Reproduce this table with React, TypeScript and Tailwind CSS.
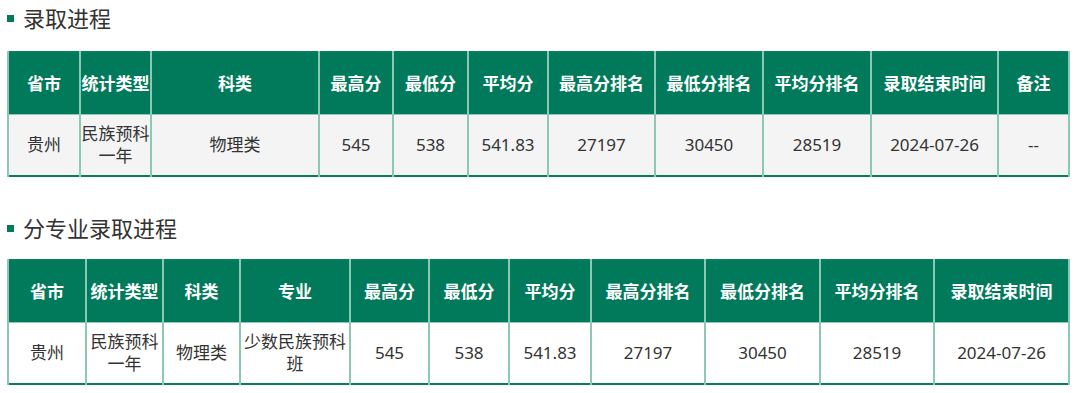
import React from "react";

const font = { fontFamily: '"Microsoft YaHei", "Noto Sans", "Noto Sans CJK SC", sans-serif' };

type Col = { h: string; w: number };

function Heading({ text }: { text: string }) {
  return (
    <div className="flex items-center h-[36px]">
      <div className="w-[7px] h-[7px] bg-[#007a5a] mr-[9px]" />
      <span className="text-[22px] text-[#333] leading-none">{text}</span>
    </div>
  );
}

function DataTable({ cols, row, bg }: { cols: Col[]; row: string[]; bg: string }) {
  return (
    <table className="table-fixed border-collapse border-2 border-[#0a7d5c] w-[1061px]">
      <colgroup>
        {cols.map((c, i) => (
          <col key={i} style={{ width: c.w }} />
        ))}
      </colgroup>
      <thead>
        <tr className="h-[62px] bg-[#007a5a]">
          {cols.map((c, i) => (
            <th
              key={i}
              className="border-x-2 border-b border-[#8cc9b4] text-white font-bold text-[17px] text-center px-0 whitespace-nowrap overflow-hidden"
            >
              {c.h}
            </th>
          ))}
        </tr>
      </thead>
      <tbody>
        <tr className={`h-[62px] ${bg}`}>
          {row.map((v, i) => (
            <td
              key={i}
              className="border-x-2 border-[#8cc9b4] text-[#333] text-[17px] leading-[22px] text-center px-0"
            >
              {v}
            </td>
          ))}
        </tr>
      </tbody>
    </table>
  );
}

export default function App() {
  const cols1: Col[] = [
    { h: "省市", w: 72 },
    { h: "统计类型", w: 71 },
    { h: "科类", w: 168 },
    { h: "最高分", w: 74 },
    { h: "最低分", w: 75 },
    { h: "平均分", w: 80 },
    { h: "最高分排名", w: 107 },
    { h: "最低分排名", w: 108 },
    { h: "平均分排名", w: 108 },
    { h: "录取结束时间", w: 127 },
    { h: "备注", w: 71 },
  ];
  const row1 = ["贵州", "民族预科一年", "物理类", "545", "538", "541.83", "27197", "30450", "28519", "2024-07-26", "--"];
  const cols2: Col[] = [
    { h: "省市", w: 78 },
    { h: "统计类型", w: 77 },
    { h: "科类", w: 77 },
    { h: "专业", w: 110 },
    { h: "最高分", w: 79 },
    { h: "最低分", w: 80 },
    { h: "平均分", w: 82 },
    { h: "最高分排名", w: 114 },
    { h: "最低分排名", w: 115 },
    { h: "平均分排名", w: 114 },
    { h: "录取结束时间", w: 135 },
  ];
  const row2 = ["贵州", "民族预科一年", "物理类", "少数民族预科班", "545", "538", "541.83", "27197", "30450", "28519", "2024-07-26"];
  return (
    <div className="w-[1080px] h-[393px] bg-white px-[7px] overflow-hidden" style={font}>
      <Heading text="录取进程" />
      <div className="mt-[15px]">
        <DataTable cols={cols1} row={row1} bg="bg-[#f4f4f4]" />
      </div>
      <div className="mt-[33px]">
        <Heading text="分专业录取进程" />
      </div>
      <div className="mt-[13px]">
        <DataTable cols={cols2} row={row2} bg="bg-white" />
      </div>
    </div>
  );
}
